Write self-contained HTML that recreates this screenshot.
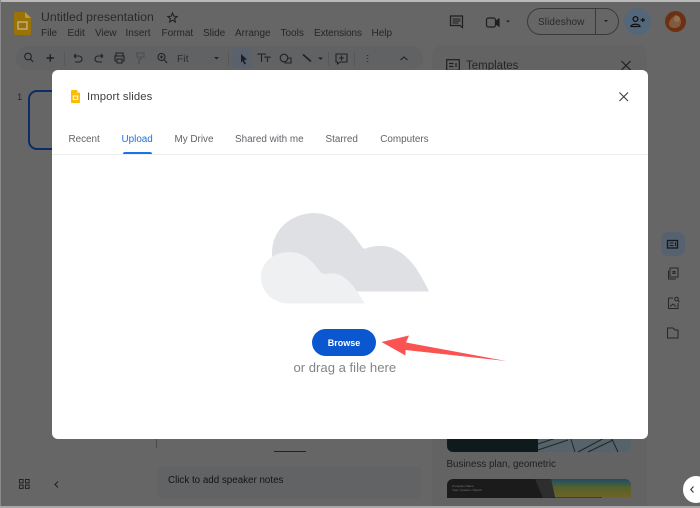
<!DOCTYPE html>
<html lang="en">
<head>
<meta charset="utf-8">
<title>Import slides</title>
<style>
html,body{margin:0;padding:0}
body{width:700px;height:508px;overflow:hidden;position:relative;background:#666;font-family:"Liberation Sans",sans-serif}
.t{position:absolute;white-space:nowrap;line-height:1}
svg{position:absolute;overflow:visible}
.m{font-size:10px;color:#262626;top:28.500px}
.tab{font-size:9.900px;color:#5f6368;top:134.500px}
</style>
</head>
<body>
<!-- window edges -->
<div style="position:absolute;left:0;top:0;width:700px;height:2px;background:#b9b9b9"></div>
<div style="position:absolute;left:0;top:0;width:1px;height:508px;background:#8a8a8a"></div>
<div style="position:absolute;left:0;top:506px;width:700px;height:2px;background:#a8a8a8"></div>

<!-- slides logo -->
<svg style="left:14px;top:12px" width="17" height="23" viewBox="0 0 17 23">
<path d="M2 0H11L17 6V21a2 2 0 0 1-2 2H2a2 2 0 0 1-2-2V2a2 2 0 0 1 2-2z" fill="#9a7205"/>
<path d="M11 0L17 6H12a1 1 0 0 1-1-1z" fill="#bd9a3a"/>
<rect x="4" y="10" width="9" height="7" fill="none" stroke="#c4b280" stroke-width="1.400"/>
</svg>

<div class="t" style="left:41px;top:11px;font-size:12.300px;color:#2a2a2a">Untitled presentation</div>
<svg style="left:167px;top:12px" width="11" height="11" viewBox="0 0 11 11" fill="none" stroke="#1c1c1c" stroke-width="1"><path d="M5.500 1L6.800 4.200L10.200 4.400L7.600 6.600L8.400 10L5.500 8.100L2.600 10L3.400 6.600L.8 4.400L4.200 4.200z"/></svg>

<div class="t m" style="left:41px">File</div>
<div class="t m" style="left:67.500px">Edit</div>
<div class="t m" style="left:95px">View</div>
<div class="t m" style="left:125.500px">Insert</div>
<div class="t m" style="left:161.500px">Format</div>
<div class="t m" style="left:203px">Slide</div>
<div class="t m" style="left:235px">Arrange</div>
<div class="t m" style="left:280.500px">Tools</div>
<div class="t m" style="left:314px;letter-spacing:-.1px">Extensions</div>
<div class="t m" style="left:371.500px">Help</div>

<!-- toolbar -->
<div style="position:absolute;left:16px;top:46px;width:407px;height:24px;border-radius:12px;background:#616264"></div>
<div style="position:absolute;left:232px;top:48px;width:20px;height:20px;border-radius:3px;background:#59626c"></div>
<svg style="left:0;top:0" width="700" height="80" viewBox="0 0 700 80" fill="none" stroke="#222" stroke-width="1.100">
<circle cx="28" cy="56.500" r="3.300"/><path d="M30.500 59L33 62"/>
<path d="M46.500 58H54M50.250 54.200V61.800" stroke-width="1.400"/>
<path d="M64.500 52V66M228.500 52V66M328.500 52V66M354.500 52V66" stroke="#575757" stroke-width=".8"/>
<path d="M74 56H79a3 3 0 0 1 0 6H75M74 56l2-2M74 56l2 2"/>
<path d="M103 56H98a3 3 0 0 0 0 6H102M103 56l-2-2M103 56l-2 2"/>
<path d="M116 56V53H123V56M116 61H115V56H124V61H123M117 59H122V63H117z"/>
<path d="M137 53H144V57H137zM141 57V59H139V64" stroke="#4c4c4c"/>
<circle cx="161.500" cy="57" r="3.500"/><path d="M164.500 60L167 63M160 57H163M161.500 55.500V58.500"/>
<path d="M241 54L247 59.500L244 60L246 63.500L244.500 64.500L242.500 60.800L241 62.800z" fill="#1a1f24" stroke="none"/>
<path d="M258 55V54H265V55M261.500 54V62M265 58V57H270V58M267.500 57V62" stroke-width="1.100"/>
<circle cx="284" cy="58" r="3.800"/><path d="M287 58H291V63H285V62"/>
<path d="M303 54.500L311 61.500" stroke-width="1.800"/>
<path d="M318 57.500L320.500 60L323 57.500z" fill="#222" stroke="none"/>
<path d="M336 54H347V62H340L337.500 64V62H336zM341.500 55.500V60.500M339 58H344"/>
<path d="M367.500 55V55.800M367.500 58.200V59M367.500 61.200V62" stroke-width="1.500"/>
<path d="M400.500 60L404 57L407.500 60"/>
<path d="M214 57L216.500 59.500L219 57z" fill="#222" stroke="none"/>
</svg>
<div class="t" style="left:177px;top:54.500px;font-size:10px;color:#2a2a2a;letter-spacing:.2px">Fit</div>

<!-- top right -->
<svg style="left:0;top:0" width="700" height="40" viewBox="0 0 700 40" fill="none" stroke="#1f1f1f" stroke-width="1.200">
<path d="M450.500 16H462.500V27.500L460 25.500H450.500z"/><path d="M452.500 19H460.500M452.500 21H460.500M452.500 23H458.500" stroke-width=".9"/>
<rect x="486.500" y="18" width="9" height="9" rx="2"/><path d="M496 21L499 19V26L496 24z" fill="#1f1f1f"/>
<path d="M506 20.500L508 22.500L510 20.500z" fill="#1f1f1f" stroke="none"/>
<path d="M604 20L606 22L608 20z" fill="#1f1f1f" stroke="none"/>
</svg>
<div style="position:absolute;left:527px;top:8px;width:92px;height:27px;box-sizing:border-box;border:1px solid #3a3a3a;border-radius:14px"></div>
<div style="position:absolute;left:595px;top:8px;width:1px;height:27px;background:#3a3a3a"></div>
<div class="t" style="left:538px;top:17.500px;font-size:10px;color:#2a2a2a;letter-spacing:.1px">Slideshow</div>
<div style="position:absolute;left:624px;top:8px;width:27px;height:27px;border-radius:50%;background:#54677a"></div>
<svg style="left:630px;top:15px" width="16" height="13" viewBox="0 0 16 13" fill="none" stroke="#111" stroke-width="1.300">
<circle cx="5.500" cy="4" r="2.400"/><path d="M1 11.500C1 8.500 10 8.500 10 11.500z"/><path d="M10.500 5H15M12.800 3V7"/>
</svg>
<svg style="left:665px;top:11px" width="21" height="21" viewBox="0 0 21 21">
<circle cx="10.500" cy="10.500" r="10.500" fill="#6e3013"/>
<path d="M4 13C4 8 9 6 10 4C13 4 16 7 16 11C16 14 14 17 10 17C7 17 4 16 4 13z" fill="#7f5c3f"/>
<circle cx="12" cy="8" r="3" fill="#94704f"/>
</svg>

<!-- templates panel -->
<div style="position:absolute;left:432px;top:45px;width:215px;height:461px;background:#636364;border-radius:10px 10px 0 0"></div>
<svg style="left:446px;top:59px" width="14" height="12" viewBox="0 0 14 12" fill="none" stroke="#1f1f1f" stroke-width="1.200">
<rect x=".7" y=".7" width="12.600" height="10.600"/><path d="M3 4.500H7.500M3 7.500H7.500M10 4V8"/>
</svg>
<div class="t" style="left:466px;top:60.500px;font-size:11.500px;color:#262626">Templates</div>
<svg style="left:620.500px;top:61px" width="10" height="9" viewBox="0 0 10 9" fill="none" stroke="#1f1f1f" stroke-width="1.200"><path d="M.5 0L9.500 9M9.500 0L.5 9"/></svg>

<!-- thumb -->
<div style="position:absolute;left:27.500px;top:89.500px;width:30px;height:60.500px;box-sizing:border-box;border:2px solid #0c2c66;border-radius:9px 0 0 9px"></div>
<div class="t" style="left:17px;top:93px;font-size:9.500px;color:#262626">1</div>

<!-- side rail -->
<div style="position:absolute;left:661px;top:232px;width:24px;height:24px;border-radius:7px;background:#56626f"></div>
<svg style="left:640px;top:220px" width="60" height="130" viewBox="0 0 60 130" fill="none" stroke="#262626" stroke-width="1">
<rect x="27.500" y="20.500" width="10" height="7.500" stroke="#141a20" stroke-width="1.300"/><path d="M29.500 23H33.500M29.500 25.500H33.500M35.500 22.500V26" stroke="#141a20"/>
<rect x="30" y="48" width="8" height="9"/><path d="M28.500 50.500V59H36M33 51.500h2v2h-2z"/>
<path d="M28.500 78H33M28.500 78V88.500H38V83M30 86.500L33 84L36 86.500"/><circle cx="36.500" cy="79" r="1.800"/><path d="M37.800 80.300L39.500 82"/>
<path d="M27.500 108H33L35 110H38V118H27.500z"/>
</svg>

<!-- bottom left -->
<svg style="left:19px;top:479px" width="11" height="10" viewBox="0 0 11 10" fill="none" stroke="#222" stroke-width="1"><rect x=".5" y=".5" width="3.600" height="3.400"/><rect x="6.500" y=".5" width="3.600" height="3.400"/><rect x=".5" y="6" width="3.600" height="3.400"/><rect x="6.500" y="6" width="3.600" height="3.400"/></svg>
<svg style="left:54px;top:481px" width="5" height="7" viewBox="0 0 5 7" fill="none" stroke="#222" stroke-width="1.100"><path d="M4 .5L1 3.500L4 6.500"/></svg>
<div style="position:absolute;left:156px;top:439px;width:1px;height:9px;background:#4a4a4a"></div>
<div style="position:absolute;left:274px;top:451px;width:32px;height:1px;background:#222"></div>
<div style="position:absolute;left:157px;top:466px;width:265px;height:32px;background:#626365;border-radius:6px"></div>
<div class="t" style="left:168px;top:475.500px;font-size:9.800px;color:#141414">Click to add speaker notes</div>

<!-- template thumbnails -->
<div style="position:absolute;left:447px;top:430px;width:92px;height:22px;background:#0f1a1c;border-radius:0 0 0 6px"></div>
<div style="position:absolute;left:538px;top:430px;width:93px;height:22px;background:#56636b;border-radius:0 0 6px 0"></div>
<svg style="left:538px;top:430px" width="93" height="22" viewBox="0 0 93 22" fill="none" stroke="#20262a" stroke-width="1"><path d="M30 0L37 22M72 5L80 22M0 14L30 4M0 20L30 10M40 22L70 6M50 22L75 10"/></svg>
<div class="t" style="left:446.500px;top:459.500px;font-size:9.800px;color:#1f1f1f">Business plan, geometric</div>
<div style="position:absolute;left:447px;top:479px;width:155px;height:18.500px;background:#1b1b1b;border-radius:6px 0 0 0"></div>
<div style="position:absolute;left:551px;top:479px;width:80px;height:18.500px;background:linear-gradient(#1d4d66 0,#55622a 45%,#706327 100%);border-radius:0 6px 0 0;clip-path:polygon(0 0,100% 0,100% 100%,4px 100%)"></div>
<svg style="left:535px;top:479px" width="22" height="19" viewBox="0 0 22 18.500"><path d="M0 0H16L20 18.500H8z" fill="#2e2e2e"/></svg>
<div class="t" style="left:452px;top:485px;font-size:3px;color:#777">Company Name</div>
<div class="t" style="left:452px;top:489px;font-size:3px;color:#777">Year / Quarter / Month</div>

<div style="position:absolute;left:683px;top:476px;width:26px;height:26.500px;border-radius:50%;background:#fff"></div>
<svg style="left:690px;top:486px" width="4" height="7" viewBox="0 0 4 7" fill="none" stroke="#333" stroke-width="1.100"><path d="M3.500 .5L.8 3.500L3.500 6.500"/></svg>

<!-- dialog -->
<div style="position:absolute;left:52px;top:70px;width:596px;height:369px;background:#fff;border-radius:6px"></div>
<svg style="left:71px;top:90px" width="9" height="13" viewBox="0 0 9 13">
<path d="M1 0H6L9 3V12a1 1 0 0 1-1 1H1a1 1 0 0 1-1-1V1a1 1 0 0 1 1-1z" fill="#fbbc04"/>
<path d="M6 0L9 3H6z" fill="#fde293"/>
<rect x="2.300" y="6" width="4.400" height="3.400" fill="none" stroke="#fff" stroke-width="1"/>
</svg>
<div class="t" style="left:87px;top:91.500px;font-size:11.300px;color:#3c4043;letter-spacing:.1px">Import slides</div>
<svg style="left:618.500px;top:92px" width="9.500" height="9.500" viewBox="0 0 10 10" fill="none" stroke="#3c4043" stroke-width="1.200"><path d="M.5 .5L9.500 9.500M9.500 .5L.5 9.500"/></svg>

<div class="t tab" style="left:68.500px">Recent</div>
<div class="t tab" style="left:121.500px;color:#1a73e8">Upload</div>
<div class="t tab" style="left:174.500px">My Drive</div>
<div class="t tab" style="left:235px">Shared with me</div>
<div class="t tab" style="left:325.500px">Starred</div>
<div class="t tab" style="left:380.300px">Computers</div>
<div style="position:absolute;left:123px;top:152px;width:29px;height:2px;background:#1a73e8;border-radius:2px 2px 0 0"></div>
<div style="position:absolute;left:52px;top:154px;width:596px;height:1px;background:#eceded"></div>

<!-- cloud -->
<svg style="left:240px;top:200px" width="280" height="190" viewBox="0 0 280 190">
<path d="M32 92V53C32 30 50 14 73 13C92 13 106 25 115 37L122 47C123 49 125 49 127 48C133 46 137 46 142 46C155 46 165 55 172 63C178 70 184 81 189 91.500H32z" fill="#dfe0e3"/>
<path d="M48 103.500C33 103 21 92 21 77C21 63 33 52 49 52C60 52 68 57 74 64L79 70C81 73 83 74 86 74C90 73 93 73 97 74C104 76 109 81 113 86C117 91 121 98 125 103.500z" fill="#eff0f1"/>
</svg>

<!-- browse -->
<div style="position:absolute;left:312px;top:329px;width:64px;height:27px;border-radius:14px;background:#0b57d0"></div>
<div class="t" style="left:312px;top:339px;width:64px;text-align:center;font-size:9px;font-weight:bold;color:#fff">Browse</div>
<div class="t" style="left:293.500px;top:361px;font-size:13.100px;color:#80868b">or drag a file here</div>

<!-- arrow -->
<svg style="left:0;top:0" width="700" height="508" viewBox="0 0 700 508">
<path d="M381.500 342L409 335.500L406 342.500L506 361L405.500 350L405.500 355.500z" fill="#fb5252"/>
</svg>
</body>
</html>
